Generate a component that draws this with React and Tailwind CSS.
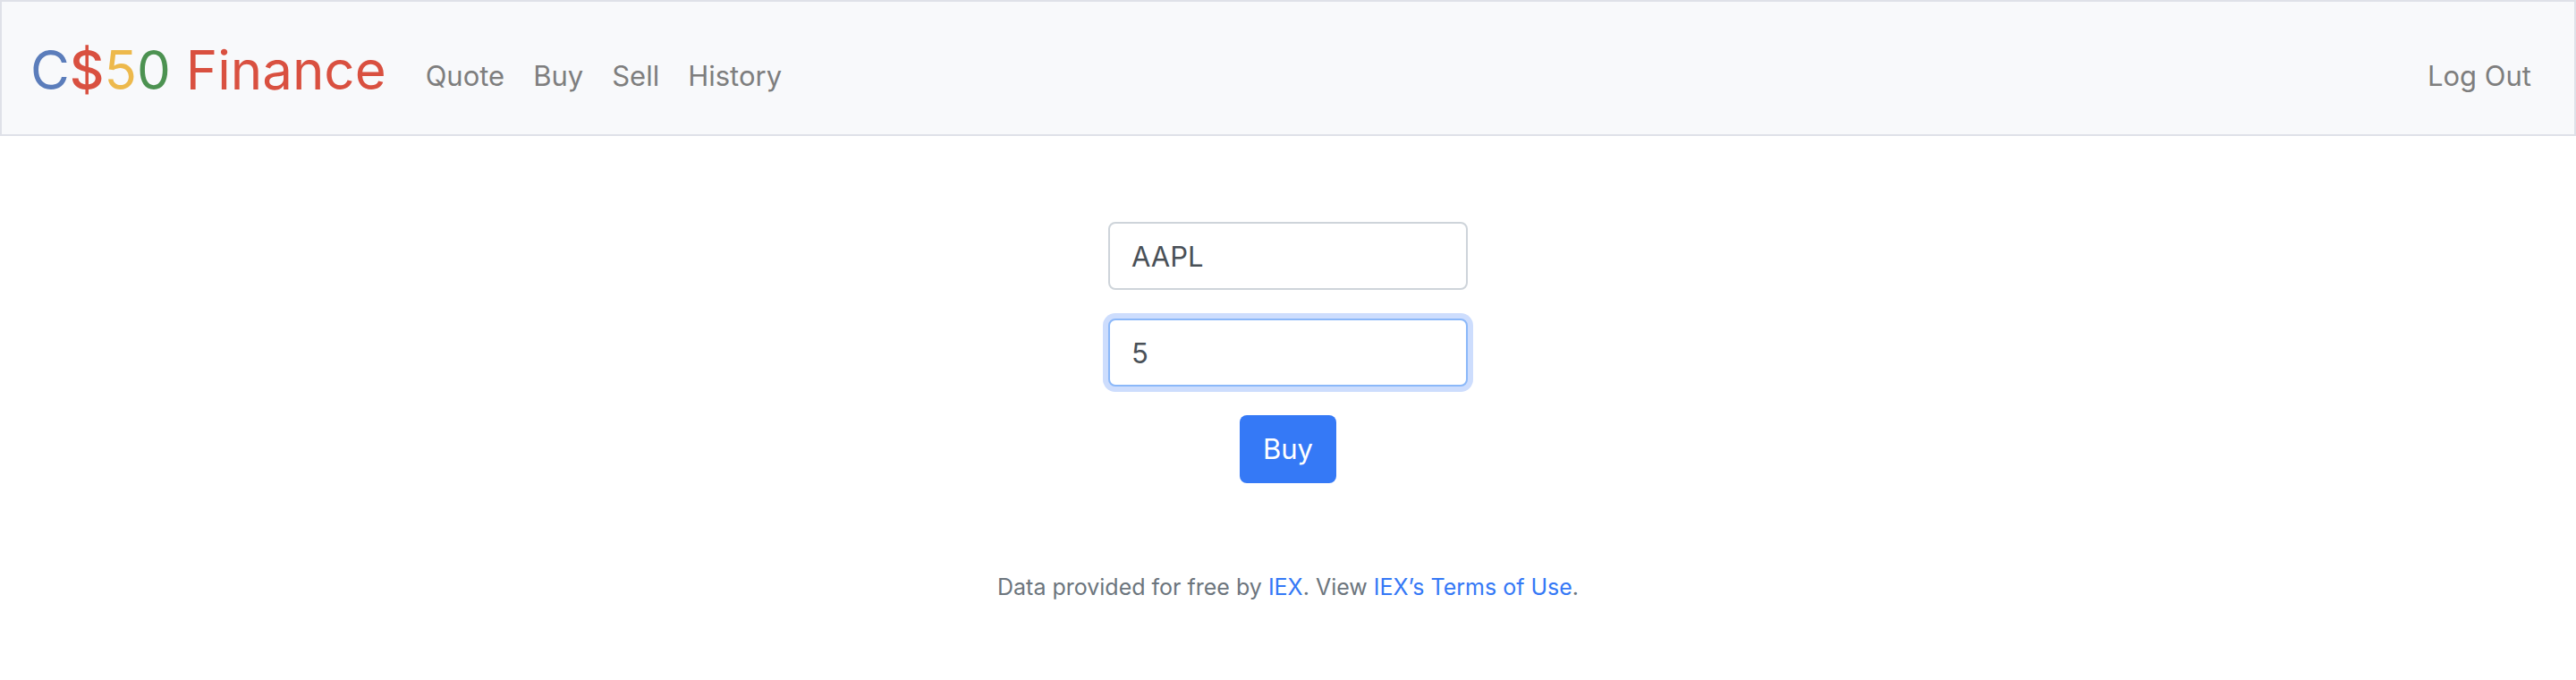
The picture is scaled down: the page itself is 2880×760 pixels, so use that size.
const links = ['Quote', 'Buy', 'Sell', 'History'];

const field =
  'block h-[76px] w-[402px] rounded-lg border-2 bg-white px-6 text-[31px] leading-[48px] text-[#495057] outline-none';

export default function App() {
  return (
    <div className="bg-white font-['Inter','Liberation_Sans',sans-serif] text-[31px] leading-[48px]">
      <nav className="flex items-center border-2 border-[#dfe1e8] bg-[#f8f9fb] px-8 py-4">
        <a href="#home" className="mr-7 pt-3 pb-2 text-[60px] leading-[96px] whitespace-nowrap text-[#d95040]">
          <span className="text-[#5b7dbb]">C</span>
          <span className="font-medium">$</span>
          <span className="text-[#edb94c]">5</span>
          <span className="text-[#4c9251]">0</span> Finance
        </a>
        <ul className="mt-[18px] flex grow">
          {links.map((label) => (
            <li key={label}>
              <a href={`#${label.toLowerCase()}`} className="block px-4 text-[#7e7e7e]">
                {label}
              </a>
            </li>
          ))}
          <li className="ml-auto">
            <a href="#logout" className="block px-4 text-[#7e7e7e]">Log Out</a>
          </li>
        </ul>
      </nav>
      <main className="pt-24">
        <form className="flex flex-col items-center gap-8" onSubmit={(e) => e.preventDefault()}>
          <input
            aria-label="Symbol"
            type="text"
            defaultValue="AAPL"
            className={`${field} border-[#ced4da]`}
          />
          <input
            aria-label="Shares"
            type="text"
            inputMode="numeric"
            defaultValue="5"
            className={`${field} border-[#8bb8f9] shadow-[0_0_0_6px_#cdddfd]`}
          />
          <button type="submit" className="h-[76px] rounded-lg bg-[#3579f6] px-[26px] text-white">
            Buy
          </button>
        </form>
      </main>
      <footer className="pt-24 pb-20 text-center text-[25px] leading-[40px] text-[#6c757d]">
        Data provided for free by <a href="#iex" className="text-[#3478f6]">IEX</a>. View{' '}
        <a href="#terms" className="text-[#3478f6]">IEX’s Terms of Use</a>.
      </footer>
    </div>
  );
}
